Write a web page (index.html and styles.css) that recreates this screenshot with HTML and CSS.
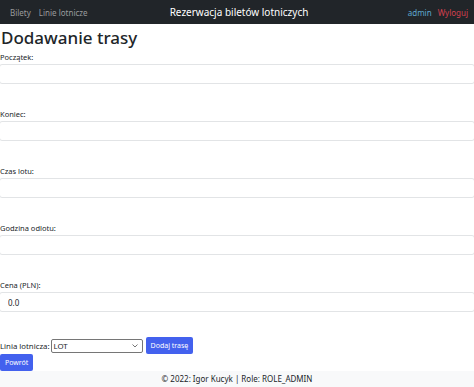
FILE: index.html
```html
<!DOCTYPE html>
<html lang="pl">
<head>
  <meta charset="UTF-8" />
  <meta name="viewport" content="width=device-width, initial-scale=1" />
  <title>Dodawanie trasy</title>
  <link rel="stylesheet" href="styles.css">
</head>
<body>
  <nav class="navbar">
    <div class="nav-left">
      <a class="nav-link" href="#">Bilety</a>
      <a class="nav-link" href="#">Linie lotnicze</a>
    </div>
    <div class="nav-title">Rezerwacja biletów lotniczych</div>
    <div class="nav-right">
      <a class="nav-user" href="#">admin</a>
      <a class="nav-logout" href="#">Wyloguj</a>
    </div>
  </nav>

  <main class="content">
    <h1 class="page-title">Dodawanie trasy</h1>

    <form class="route-form">
      <div class="form-group">
        <label>Początek:</label>
        <input class="form-control" type="text">
      </div>
      <div class="form-group">
        <label>Koniec:</label>
        <input class="form-control" type="text">
      </div>
      <div class="form-group">
        <label>Czas lotu:</label>
        <input class="form-control" type="text">
      </div>
      <div class="form-group">
        <label>Godzina odlotu:</label>
        <input class="form-control" type="text">
      </div>
      <div class="form-group">
        <label>Cena (PLN):</label>
        <input class="form-control" type="text" value="0.0">
      </div>

      <div class="airline-row">
        <label>Linia lotnicza:</label>
        <div class="select-box">
          <span>LOT</span>
          <svg width="6" height="4" viewBox="0 0 6 4"><path d="M0.5 0.5l2.5 2.5 2.5-2.5" fill="none" stroke="#666" stroke-width="0.9"/></svg>
        </div>
        <button class="btn" type="button">Dodaj trasę</button>
      </div>
    </form>

    <button class="btn btn-back" type="button">Powrót</button>
  </main>

  <footer class="footer">© 2022: Igor Kucyk | Role: ROLE_ADMIN</footer>
</body>
</html>
```

FILE: styles.css
```css
html, body {
  margin: 0;
  padding: 0;
  font-family: 'Noto Sans', 'Open Sans', sans-serif;
  color: #212529;
  background: #fff;
  font-size: 7.5px;
  overflow: hidden;
}

a {
  text-decoration: none;
}

.navbar {
  height: 24px;
  background-color: #212529;
  display: flex;
  align-items: center;
  justify-content: space-between;
  padding: 0 6px 0 10px;
  box-sizing: border-box;
}

.nav-left,
.nav-right {
  display: flex;
  gap: 8px;
  width: 120px;
}

.nav-right {
  justify-content: flex-end;
  gap: 6px;
}

.nav-link {
  color: #9a9b9d;
  font-size: 8px;
}

.nav-title {
  color: #fff;
  font-size: 10px;
}

.nav-user {
  color: #5fa7cf;
  font-size: 8px;
}

.nav-logout {
  color: #d2404f;
  font-size: 8px;
}

.page-title {
  font-size: 17px;
  font-weight: 500;
  margin: 0 0 0 1px;
  line-height: 28px;
}

.form-group {
  display: flex;
  flex-direction: column;
  margin-bottom: 25px;
}

.form-group label {
  line-height: 10px;
  margin-bottom: 2px;
}

.form-control {
  width: calc(100% + 2px);
  margin-left: -1px;
  height: 20px;
  box-sizing: border-box;
  border: 1px solid #e2e4e6;
  border-radius: 3px;
  padding: 0 8px;
  font-family: inherit;
  font-size: 8px;
  color: #212529;
  outline: none;
}

.airline-row {
  display: flex;
  align-items: center;
  font-size: 7.8px;
}

.airline-row label {
  margin-right: 1px;
}

.select-box {
  width: 92px;
  height: 14px;
  box-sizing: border-box;
  border: 1px solid #767676;
  border-radius: 2px;
  display: flex;
  align-items: center;
  justify-content: space-between;
  padding: 0 4px 0 2px;
  margin-right: 3px;
}

.btn {
  background-color: #4361ee;
  color: #fff;
  border: none;
  border-radius: 2px;
  font-family: inherit;
  font-size: 7px;
  height: 17px;
  padding: 0 5px;
  cursor: pointer;
}

.btn-back {
  display: block;
  padding: 0 5px;
}

.footer {
  background-color: #f8f9fa;
  text-align: center;
  height: 16px;
  line-height: 16px;
  font-size: 8px;
}
```
